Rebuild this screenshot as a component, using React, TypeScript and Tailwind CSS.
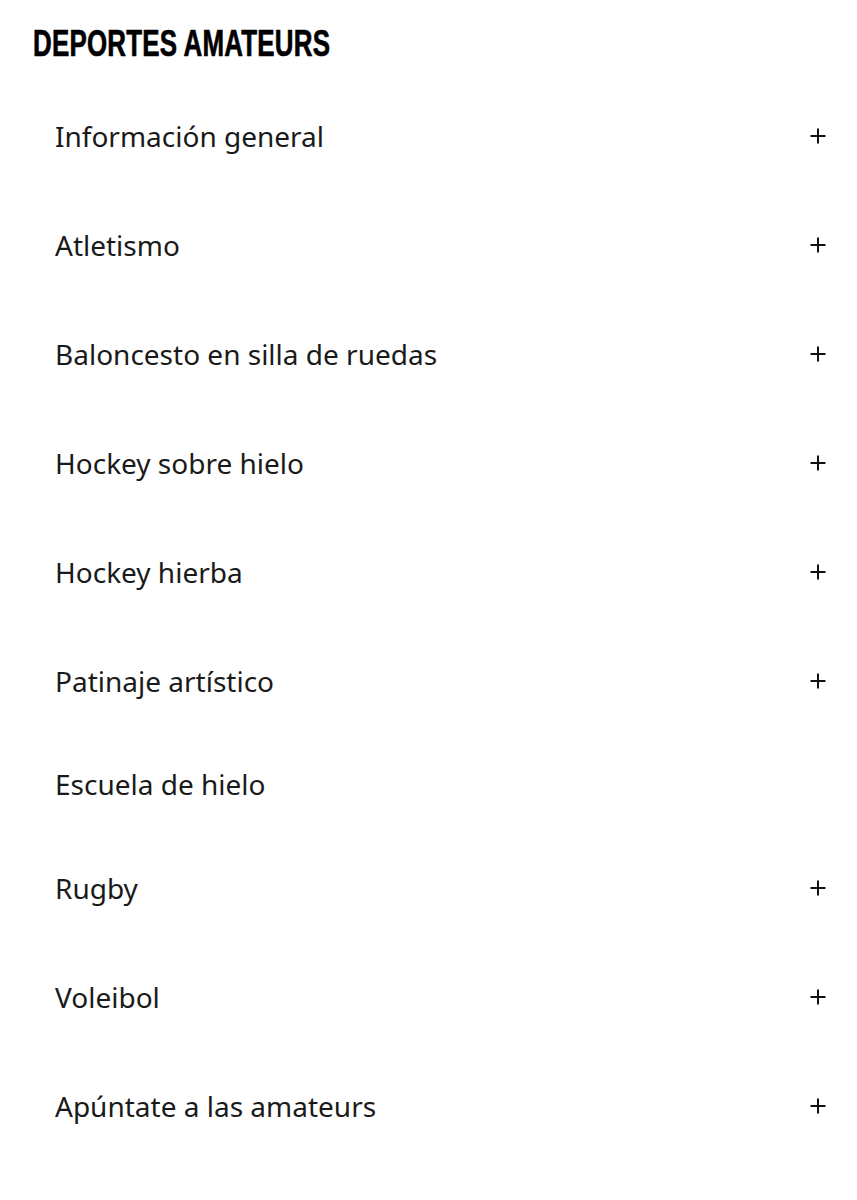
const items: { label: string; expandable: boolean }[] = [
  { label: "Información general", expandable: true },
  { label: "Atletismo", expandable: true },
  { label: "Baloncesto en silla de ruedas", expandable: true },
  { label: "Hockey sobre hielo", expandable: true },
  { label: "Hockey hierba", expandable: true },
  { label: "Patinaje artístico", expandable: true },
  { label: "Escuela de hielo", expandable: false },
  { label: "Rugby", expandable: true },
  { label: "Voleibol", expandable: true },
  { label: "Apúntate a las amateurs", expandable: true },
];

function PlusIcon() {
  return (
    <svg width="16" height="16" viewBox="0 0 16 16" className="text-[#111]">
      <path d="M8 0.5v15M0.5 8h15" stroke="currentColor" strokeWidth="2" />
    </svg>
  );
}

export default function App() {
  return (
    <div className="w-[857px] min-h-[1200px] bg-white text-[#1a1a1a] font-['Noto_Sans',sans-serif]">
      <div className="pl-[33px] pt-[22px] h-[81px]">
        <h1 className="inline-block origin-left scale-x-[0.7] whitespace-nowrap font-['Liberation_Sans',sans-serif] text-[37px] font-bold leading-[44px] tracking-[0.3px] text-black [-webkit-text-stroke:0.7px_black]">
          DEPORTES AMATEURS
        </h1>
      </div>
      <ul className="flex flex-col">
        {items.map((item) => (
          <li
            key={item.label}
            className={
              "flex items-center justify-between pl-[55px] pr-[31px] " +
              (item.expandable ? "h-[109px]" : "h-[98px]")
            }
          >
            <span className="text-[28px] font-normal leading-none">{item.label}</span>
            {item.expandable && <PlusIcon />}
          </li>
        ))}
      </ul>
    </div>
  );
}
